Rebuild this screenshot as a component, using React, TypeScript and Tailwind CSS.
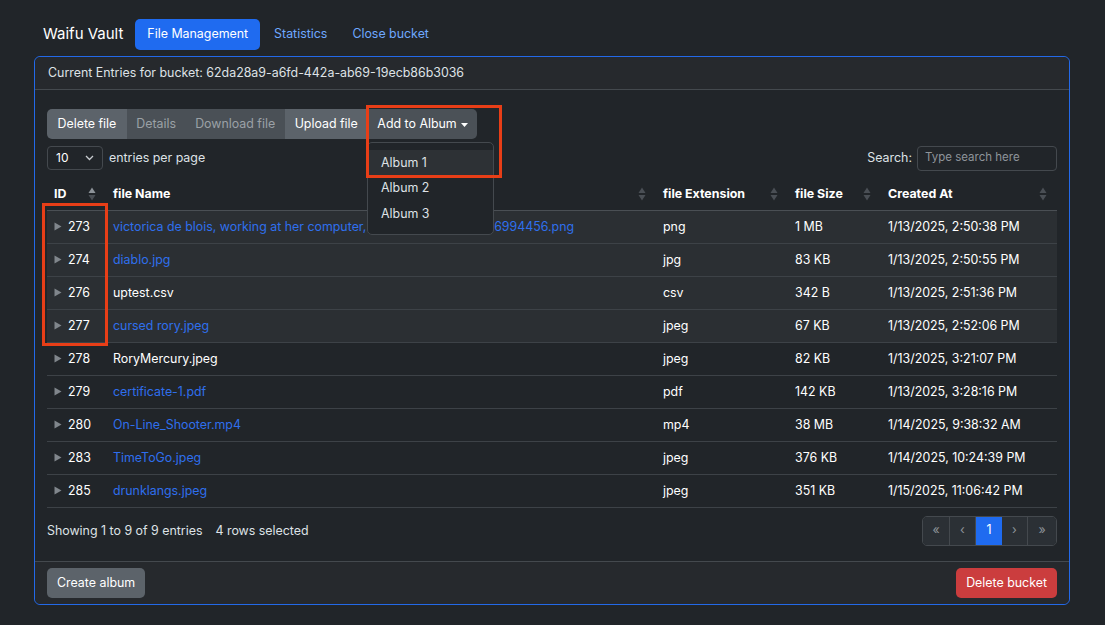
import React from 'react';

interface Row {
  id: number;
  name: string;
  ext: string;
  size: string;
  created: string;
  link: boolean;
  selected: boolean;
}

const rows: Row[] = [
  { id: 273, name: 'victorica de blois, working at her computer, dramatic light 1736776994456.png', ext: 'png', size: '1 MB', created: '1/13/2025, 2:50:38 PM', link: true, selected: true },
  { id: 274, name: 'diablo.jpg', ext: 'jpg', size: '83 KB', created: '1/13/2025, 2:50:55 PM', link: true, selected: true },
  { id: 276, name: 'uptest.csv', ext: 'csv', size: '342 B', created: '1/13/2025, 2:51:36 PM', link: false, selected: true },
  { id: 277, name: 'cursed rory.jpeg', ext: 'jpeg', size: '67 KB', created: '1/13/2025, 2:52:06 PM', link: true, selected: true },
  { id: 278, name: 'RoryMercury.jpeg', ext: 'jpeg', size: '82 KB', created: '1/13/2025, 3:21:07 PM', link: false, selected: false },
  { id: 279, name: 'certificate-1.pdf', ext: 'pdf', size: '142 KB', created: '1/13/2025, 3:28:16 PM', link: true, selected: false },
  { id: 280, name: 'On-Line_Shooter.mp4', ext: 'mp4', size: '38 MB', created: '1/14/2025, 9:38:32 AM', link: true, selected: false },
  { id: 283, name: 'TimeToGo.jpeg', ext: 'jpeg', size: '376 KB', created: '1/14/2025, 10:24:39 PM', link: true, selected: false },
  { id: 285, name: 'drunklangs.jpeg', ext: 'jpeg', size: '351 KB', created: '1/15/2025, 11:06:42 PM', link: true, selected: false },
];

const SortIcon = ({ active = false }: { active?: boolean }) => (
  <svg width="8" height="14" viewBox="0 0 8 14" className="shrink-0">
    <path d="M4 0.5 L7.5 6 L0.5 6 Z" fill={active ? '#8d9399' : '#4a4f55'} />
    <path d="M4 13.5 L7.5 8 L0.5 8 Z" fill="#4a4f55" />
  </svg>
);

const Caret = () => (
  <svg width="8" height="9" viewBox="0 0 8 9" className="shrink-0">
    <path d="M0.5 0.5 L7.5 4.5 L0.5 8.5 Z" fill="#80868c" />
  </svg>
);

const Header = ({ label, active = false, className = '' }: { label: string; active?: boolean; className?: string }) => (
  <th className={`h-[32px] px-[7px] pt-[1px] text-left font-bold text-white border-b border-[#4a4f54] ${className}`}>
    <div className="flex items-center justify-between pr-[3px]">
      <span>{label}</span>
      <SortIcon active={active} />
    </div>
  </th>
);

const App: React.FC = () => {
  return (
    <div className="min-h-[625px] w-full bg-[#212529] text-[12.4px] text-[#dee2e6] px-[34px] pt-[18px]" style={{ fontFamily: 'Inter, "Liberation Sans", sans-serif' }}>
      {/* Navigation */}
      <nav className="flex items-center h-[31px] pt-[1px]">
        <span className="ml-[9px] mr-[12px] text-[15px] text-white">Waifu Vault</span>
        <button className="h-[31px] px-[12px] rounded-[5px] bg-[#1f6bf0] text-white">File Management</button>
        <a className="ml-[14px] text-[#6ea8fe]">Statistics</a>
        <a className="ml-[25px] text-[#6ea8fe]">Close bucket</a>
      </nav>

      {/* Card */}
      <div className="relative mt-[7px] w-[1036px] rounded-[6px] border border-[#2369e8]">
        <div className="h-[33px] flex items-center px-[13px] bg-[#26292d] border-b border-[#44494e] rounded-t-[6px] text-[#dee2e6]">
          Current Entries for bucket: 62da28a9-a6fd-442a-ab69-19ecb86b3036
        </div>

        <div className="px-[12px] pt-[19px] pb-[15px]">
          {/* Button group */}
          <div className="relative flex h-[30px] w-fit">
            <button className="px-[10.5px] pt-[1px] rounded-l-[5px] bg-[#5c636a] text-white">Delete file</button>
            <button className="px-[9.5px] pt-[1px] bg-[#4a5056] text-[#9ba1a6]">Details</button>
            <button className="px-[9.5px] pt-[1px] bg-[#4a5056] text-[#9ba1a6]">Download file</button>
            <button className="px-[10px] pt-[1px] bg-[#5c636a] text-white">Upload file</button>
            <button className="flex items-center gap-[4px] px-[9.5px] pt-[1px] rounded-r-[5px] bg-[#4b5157] text-white">
              Add to Album
              <svg width="7" height="4" viewBox="0 0 7 4"><path d="M0 0 L7 0 L3.5 4 Z" fill="#fff" /></svg>
            </button>

            {/* Dropdown menu */}
            <div className="absolute left-[320px] top-[33px] z-10 w-[127px] rounded-[5px] border border-[#44494e] bg-[#212529] py-[7px]">
              <div className="h-[26px] flex items-center px-[13px] bg-[#2d3135] text-[#dee2e6]">Album 1</div>
              <div className="h-[25px] flex items-center px-[13px] text-[#dee2e6]">Album 2</div>
              <div className="h-[26px] flex items-center px-[13px] text-[#dee2e6]">Album 3</div>
            </div>
          </div>

          {/* Length and search */}
          <div className="flex items-center justify-between mt-[7px] h-[24px]">
            <div className="flex items-center">
              <div className="flex items-center justify-between w-[56px] h-[24px] px-[8px] rounded-[4px] border border-[#44494e] text-[12px] text-white">
                <span>10</span>
                <svg width="9" height="6" viewBox="0 0 9 6"><path d="M1 1 L4.5 4.5 L8 1" stroke="#c8ccd0" strokeWidth="1.3" fill="none" /></svg>
              </div>
              <span className="ml-[6px]">entries per page</span>
            </div>
            <div className="flex items-center">
              <span className="mr-[5px]">Search:</span>
              <div className="w-[140px] h-[25px] flex items-center px-[7px] rounded-[4px] border border-[#44494e] text-[11.5px] text-[#8e949a]">Type search here</div>
            </div>
          </div>

          {/* Table */}
          <table className="mt-[8px] w-[1010px] border-collapse table-fixed">
            <thead>
              <tr>
                <Header label="ID" active className="w-[59px]" />
                <Header label="file Name" className="w-[550px]" />
                <Header label="file Extension" className="w-[132px]" />
                <Header label="file Size" className="w-[93px]" />
                <Header label="Created At" />
              </tr>
            </thead>
            <tbody>
              {rows.map(r => (
                <tr key={r.id} className={`h-[33px] border-b border-[#3d4247] ${r.selected ? 'bg-[#2b2f33]' : ''}`}>
                  <td className="px-[7px] pt-[1px]">
                    <div className="flex items-center gap-[6px] text-white">
                      <Caret />
                      <span>{r.id}</span>
                    </div>
                  </td>
                  <td className={`px-[7px] pt-[1px] whitespace-nowrap overflow-hidden ${r.link ? 'text-[#2f6fed]' : 'text-white'}`}>{r.name}</td>
                  <td className="px-[7px] pt-[1px] text-white">{r.ext}</td>
                  <td className="px-[7px] pt-[1px] text-white">{r.size}</td>
                  <td className="px-[7px] pt-[1px] text-white whitespace-nowrap">{r.created}</td>
                </tr>
              ))}
            </tbody>
          </table>

          {/* Info + pagination */}
          <div className="flex items-center justify-between mt-[8px] w-[1010px]">
            <div className="flex gap-[13px] pt-[2px]">
              <span>Showing 1 to 9 of 9 entries</span>
              <span>4 rows selected</span>
            </div>
            <div className="flex h-[30px] rounded-[5px] border border-[#44494e] overflow-hidden text-[#8e949a]">
              <span className="w-[27px] flex items-center justify-center bg-[#2b3035] border-r border-[#44494e]">«</span>
              <span className="w-[26px] flex items-center justify-center bg-[#2b3035] border-r border-[#44494e]">‹</span>
              <span className="w-[26px] flex items-center justify-center bg-[#1f6bf0] text-white">1</span>
              <span className="w-[26px] flex items-center justify-center bg-[#2b3035] border-r border-[#44494e]">›</span>
              <span className="w-[28px] flex items-center justify-center bg-[#2b3035]">»</span>
            </div>
          </div>
        </div>

        {/* Card footer */}
        <div className="h-[43px] flex items-center justify-between px-[12px] bg-[#26292d] border-t border-[#44494e] rounded-b-[6px]">
          <button className="h-[30px] px-[10px] pt-[1px] rounded-[5px] bg-[#5c636a] text-white">Create album</button>
          <button className="h-[30px] px-[10px] pt-[1px] rounded-[5px] bg-[#cb3d3e] text-white">Delete bucket</button>
        </div>

        {/* Annotation boxes */}
        <div className="absolute left-[331px] top-[48px] w-[136px] h-[73px] border-[3px] border-[#e83e17] z-20 pointer-events-none" />
        <div className="absolute left-[7px] top-[146px] w-[66px] h-[143px] border-[3px] border-[#e83e17] z-20 pointer-events-none" />
      </div>
    </div>
  );
};

export default App;
